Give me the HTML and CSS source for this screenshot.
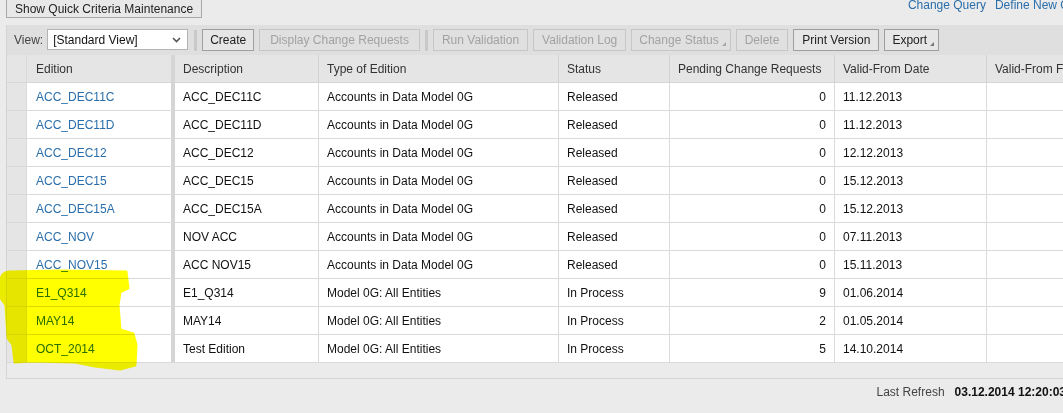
FILE: index.html
```html
<!DOCTYPE html>
<html>
<head>
<meta charset="utf-8">
<link rel="stylesheet" href="styles.css">
</head>
<body>
<div class="page">
  <div class="topbar">
    <button class="btn top-btn">Show Quick Criteria Maintenance</button>
    <div class="top-links">
      <a class="link">Change Query</a>
      <a class="link">Define New Query</a>
    </div>
  </div>

  <div class="panel">
    <div class="toolbar">
      <span class="view-label">View:</span>
      <div class="select">
        <span>[Standard View]</span>
        <svg class="chev" width="9" height="6" viewBox="0 0 9 6"><polyline points="1,1 4.5,4.5 8,1" fill="none" stroke="#555" stroke-width="1.6"/></svg>
      </div>
      <span class="sep sep-first"></span>
      <button class="btn btn-create">Create</button>
      <button class="btn dis btn-wide">Display Change Requests</button>
      <span class="sep"></span>
      <button class="btn dis">Run Validation</button>
      <button class="btn dis">Validation Log</button>
      <button class="btn dis menu">Change Status<i class="tri"></i></button>
      <button class="btn dis">Delete</button>
      <button class="btn">Print Version</button>
      <button class="btn menu">Export<i class="tri"></i></button>
    </div>

    <table class="grid">
      <thead>
        <tr>
          <th class="sel"></th>
          <th class="c-ed">Edition</th>
          <th class="c-desc">Description</th>
          <th class="c-type">Type of Edition</th>
          <th class="c-stat">Status</th>
          <th class="c-pend">Pending Change Requests</th>
          <th class="c-vfd">Valid-From Date</th>
          <th class="c-vff">Valid-From Fiscal Year</th>
        </tr>
      </thead>
      <tbody>
        <tr><td class="sel"></td><td class="c-ed"><a class="link">ACC_DEC11C</a></td><td>ACC_DEC11C</td><td>Accounts in Data Model 0G</td><td>Released</td><td class="num">0</td><td>11.12.2013</td><td></td></tr>
        <tr><td class="sel"></td><td class="c-ed"><a class="link">ACC_DEC11D</a></td><td>ACC_DEC11D</td><td>Accounts in Data Model 0G</td><td>Released</td><td class="num">0</td><td>11.12.2013</td><td></td></tr>
        <tr><td class="sel"></td><td class="c-ed"><a class="link">ACC_DEC12</a></td><td>ACC_DEC12</td><td>Accounts in Data Model 0G</td><td>Released</td><td class="num">0</td><td>12.12.2013</td><td></td></tr>
        <tr><td class="sel"></td><td class="c-ed"><a class="link">ACC_DEC15</a></td><td>ACC_DEC15</td><td>Accounts in Data Model 0G</td><td>Released</td><td class="num">0</td><td>15.12.2013</td><td></td></tr>
        <tr><td class="sel"></td><td class="c-ed"><a class="link">ACC_DEC15A</a></td><td>ACC_DEC15A</td><td>Accounts in Data Model 0G</td><td>Released</td><td class="num">0</td><td>15.12.2013</td><td></td></tr>
        <tr><td class="sel"></td><td class="c-ed"><a class="link">ACC_NOV</a></td><td>NOV ACC</td><td>Accounts in Data Model 0G</td><td>Released</td><td class="num">0</td><td>07.11.2013</td><td></td></tr>
        <tr><td class="sel"></td><td class="c-ed"><a class="link">ACC_NOV15</a></td><td>ACC NOV15</td><td>Accounts in Data Model 0G</td><td>Released</td><td class="num">0</td><td>15.11.2013</td><td></td></tr>
        <tr><td class="sel"></td><td class="c-ed"><a class="link">E1_Q314</a></td><td>E1_Q314</td><td>Model 0G: All Entities</td><td>In Process</td><td class="num">9</td><td>01.06.2014</td><td></td></tr>
        <tr><td class="sel"></td><td class="c-ed"><a class="link">MAY14</a></td><td>MAY14</td><td>Model 0G: All Entities</td><td>In Process</td><td class="num">2</td><td>01.05.2014</td><td></td></tr>
        <tr><td class="sel"></td><td class="c-ed"><a class="link">OCT_2014</a></td><td>Test Edition</td><td>Model 0G: All Entities</td><td>In Process</td><td class="num">5</td><td>14.10.2014</td><td></td></tr>
      </tbody>
    </table>
    <div class="filler"></div>
  </div>

  <div class="footer">
    <span class="refresh-label">Last Refresh</span>
    <span class="refresh-time">03.12.2014 12:20:03</span>
  </div>

  <svg class="highlight" width="140" height="110" viewBox="0 0 140 110">
    <path d="M2,11 C4,8 7,7 10,7 L60,6 L126,7 L128,23 L120,27 L118,40 L120,65 L133,69 L136,80 L135,100 L120,104 L95,101 L75,97 L30,96 L15,97 L13,80 L8,73 L6,40 L1,33 L0,20 Z" fill="#ffff00" stroke="#ffff00" stroke-width="3" stroke-linejoin="round"/>
  </svg>
</div>
</body>
</html>
```

FILE: styles.css
```css
html, body {
  margin: 0;
  padding: 0;
  overflow: hidden;
  background: #ebebeb;
}
body {
  font-family: "Liberation Sans", Arial, sans-serif;
  font-size: 12px;
  color: #111;
}
.page {
  position: relative;
  width: 1100px;
  height: 413px;
}
.topbar {
  display: flex;
  align-items: flex-start;
  justify-content: space-between;
  height: 25px;
  padding-left: 6px;
  padding-right: 7px;
}
.top-links {
  display: flex;
  gap: 9px;
  line-height: 12px;
  margin-top: -1px;
}
.link {
  color: #2a6eab;
  text-decoration: none;
  cursor: pointer;
}
.btn {
  font-family: inherit;
  font-size: 12px;
  color: #222;
  background: #e6e6e6;
  border: 1px solid #9f9f9f;
  height: 22px;
  padding: 0 8px;
  margin: 0;
  white-space: nowrap;
  display: inline-flex;
  align-items: center;
}
.top-btn {
  height: 19px;
  margin-top: -1px;
  padding: 0 8px;
  background: #e8e8e8;
  border-color: #a8a8a8;
}
.btn-create {
  padding: 0 7px;
}
.btn-wide {
  padding: 0 10px;
}
.btn.dis {
  color: #a2a2a2;
  border-color: #c6c6c6;
  background: #e0e0e0;
}
.btn.menu {
  padding-left: 7px;
  padding-right: 4px;
}
.tri {
  display: inline-block;
  width: 0;
  height: 0;
  border-left: 4px solid transparent;
  border-bottom: 4px solid #777;
  margin-left: 3px;
  align-self: flex-end;
  margin-bottom: 4px;
}
.btn.dis .tri {
  border-bottom-color: #a8a8a8;
}
.panel {
  margin-left: 6px;
  border-left: 1px solid #d4d4d4;
  border-bottom: 1px solid #d4d4d4;
  overflow: hidden;
}
.toolbar {
  display: flex;
  align-items: center;
  gap: 5px;
  height: 30px;
  padding-left: 7px;
  background: #dfdfdf;
}
.view-label {
  color: #444;
  margin-right: -1px;
}
.select {
  width: 141px;
  height: 21px;
  box-sizing: border-box;
  border: 1px solid #b4b4b4;
  background: #fff;
  display: flex;
  align-items: center;
  justify-content: space-between;
  padding: 0 6px 0 5px;
  color: #111;
  margin-top: -1px;
}
.sep {
  width: 3px;
  height: 21px;
  background: #c9c9c9;
}
.sep-first {
  margin-left: 1px;
}
.grid {
  border-collapse: separate;
  border-spacing: 0;
  table-layout: fixed;
  width: 1130px;
}
.grid th, .grid td {
  box-sizing: border-box;
  height: 28px;
  padding: 0 8px;
  text-align: left;
  font-weight: normal;
  white-space: nowrap;
  overflow: hidden;
  border-right: 1px solid #dadada;
  border-bottom: 1px solid #dadada;
}
.grid th {
  background: #e5e5e5;
  color: #333;
  border-right-color: #d2d2d2;
  border-bottom-color: #d6d6d6;
}
.grid td {
  background: #fff;
  color: #111;
}
.grid .sel {
  width: 20px;
  padding: 0;
  background: #e5e5e5;
  border-right-color: #dadada;
}
.grid td.sel {
  border-bottom-color: #d8d8d8;
}
.grid .c-ed {
  width: 148px;
  padding-left: 9px;
  border-right: 4px solid #d5d5d5;
}
.grid .c-desc { width: 144px; }
.grid .c-type { width: 240px; }
.grid .c-stat { width: 111px; }
.grid .c-pend { width: 165px; }
.grid .c-vfd { width: 152px; }
.grid .c-vff { width: 150px; }
.grid td.num {
  text-align: right;
}
.filler {
  height: 15px;
  background: #ebebeb;
}
.footer {
  display: flex;
  align-items: center;
  justify-content: flex-end;
  gap: 10px;
  height: 26px;
  padding-right: 34px;
}
.refresh-label {
  color: #444;
}
.refresh-time {
  font-weight: bold;
  color: #111;
}
.highlight {
  position: absolute;
  left: 0;
  top: 265px;
  mix-blend-mode: multiply;
  pointer-events: none;
}
```
